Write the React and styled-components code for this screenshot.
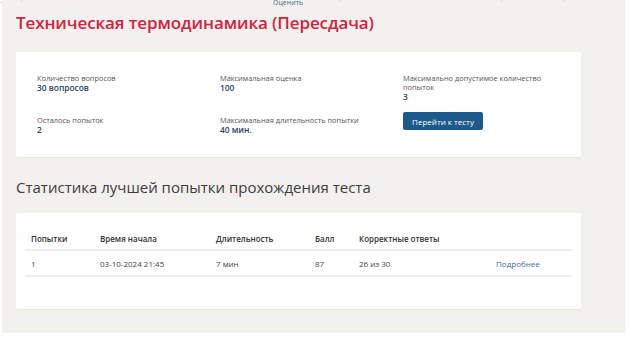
import React from 'react';
import styled, { createGlobalStyle } from 'styled-components';

const GlobalStyle = createGlobalStyle`
  body, html {
    margin: 0;
    padding: 0;
    background: #fff;
    font-family: 'Open Sans', 'Liberation Sans', sans-serif;
  }
`;

// --- top strip (bottom of the table above) ---

const TopStrip = styled.div`
  display: flex;
  width: 564px;
  height: 3px;
  box-sizing: border-box;
  border-bottom: 1px solid #d9d9d9;
`;

const StripCell = styled.div`
  width: ${(p) => p.w}px;
  box-sizing: border-box;
  border-right: 1px solid #d9d9d9;
`;

// --- page ---

const Page = styled.main`
  margin: 0 4px 0 2px;
  padding: 0 44px 24px 14px;
  background: #f2f1ee;
`;

const Rate = styled.div`
  margin: -4px 0 0 257px;
  height: 4px;
  font-size: 7px;
  line-height: 7px;
  color: #4d6a8f;
`;

const Title = styled.h1`
  margin: 0;
  padding: 8px 0 0 0;
  height: 49px;
  box-sizing: border-box;
  font-size: 17px;
  font-weight: 600;
  line-height: 24px;
  color: #d6213d;
  letter-spacing: -0.1px;
`;

const Card = styled.section`
  background: #fff;
  border-radius: 2px;
  box-shadow: 0 1px 1px rgba(0, 0, 0, 0.04);
`;

const InfoCard = styled(Card)`
  height: 105px;
  box-sizing: border-box;
  padding: 22px 0 0 21px;
`;

const InfoGrid = styled.div`
  display: grid;
  grid-template-columns: 183px 183px 170px;
  grid-template-rows: 42px auto;
`;

const Info = styled.div`
  display: flex;
  flex-direction: column;
`;

const Label = styled.span`
  font-size: 7.4px;
  line-height: 9px;
  color: #555;
`;

const Value = styled.span`
  font-size: 8.4px;
  line-height: 9px;
  font-weight: 600;
  color: #2c3e5e;
`;

const Button = styled.button`
  width: 80px;
  height: 18px;
  margin-top: -4px;
  padding: 0;
  border: none;
  border-radius: 2px;
  background: #1d5a8c;
  color: #fff;
  font-family: inherit;
  font-size: 8px;
  cursor: pointer;
`;

const Heading = styled.h2`
  margin: 0;
  height: 56px;
  padding-top: 19px;
  box-sizing: border-box;
  font-size: 15px;
  font-weight: 400;
  line-height: 22px;
  color: #3c3c3c;
`;

const TableCard = styled(Card)`
  height: 96px;
  box-sizing: border-box;
  padding: 14px 9px 0 9px;
`;

const Table = styled.table`
  width: 547px;
  border-collapse: collapse;
  font-size: 8px;
  color: #444;
`;

const Th = styled.th`
  width: ${(p) => p.w}px;
  padding: 0 0 0 6px;
  height: 22px;
  text-align: left;
  font-weight: 600;
  color: #333;
  border-bottom: 2px solid #eeeeee;
`;

const Td = styled.td`
  padding: 0 0 0 6px;
  height: 24px;
  border-bottom: 2px solid #eeeeee;
`;

const MoreLink = styled.a`
  color: #3d6a9e;
  text-decoration: none;
`;

const App = () => {
  return (
    <>
      <GlobalStyle />
      <TopStrip>
        <StripCell w={22} />
        <StripCell w={319} />
        <StripCell w={161} />
        <StripCell w={62} />
      </TopStrip>
      <Page>
        <Rate>Оценить</Rate>
        <Title>Техническая термодинамика (Пересдача)</Title>

        <InfoCard>
          <InfoGrid>
            <Info>
              <Label>Количество вопросов</Label>
              <Value>30 вопросов</Value>
            </Info>
            <Info>
              <Label>Максимальная оценка</Label>
              <Value>100</Value>
            </Info>
            <Info>
              <Label>Максимально допустимое количество попыток</Label>
              <Value>3</Value>
            </Info>
            <Info>
              <Label>Осталось попыток</Label>
              <Value>2</Value>
            </Info>
            <Info>
              <Label>Максимальная длительность попытки</Label>
              <Value>40 мин.</Value>
            </Info>
            <Info>
              <Button>Перейти к тесту</Button>
            </Info>
          </InfoGrid>
        </InfoCard>

        <Heading>Статистика лучшей попытки прохождения теста</Heading>

        <TableCard>
          <Table>
            <thead>
              <tr>
                <Th w={63}>Попытки</Th>
                <Th w={110}>Время начала</Th>
                <Th w={93}>Длительность</Th>
                <Th w={38}>Балл</Th>
                <Th w={131}>Корректные ответы</Th>
                <Th />
              </tr>
            </thead>
            <tbody>
              <tr>
                <Td>1</Td>
                <Td>03-10-2024 21:45</Td>
                <Td>7 мин</Td>
                <Td>87</Td>
                <Td>26 из 30</Td>
                <Td>
                  <MoreLink href="#">Подробнее</MoreLink>
                </Td>
              </tr>
            </tbody>
          </Table>
        </TableCard>
      </Page>
    </>
  );
};

export default App;
